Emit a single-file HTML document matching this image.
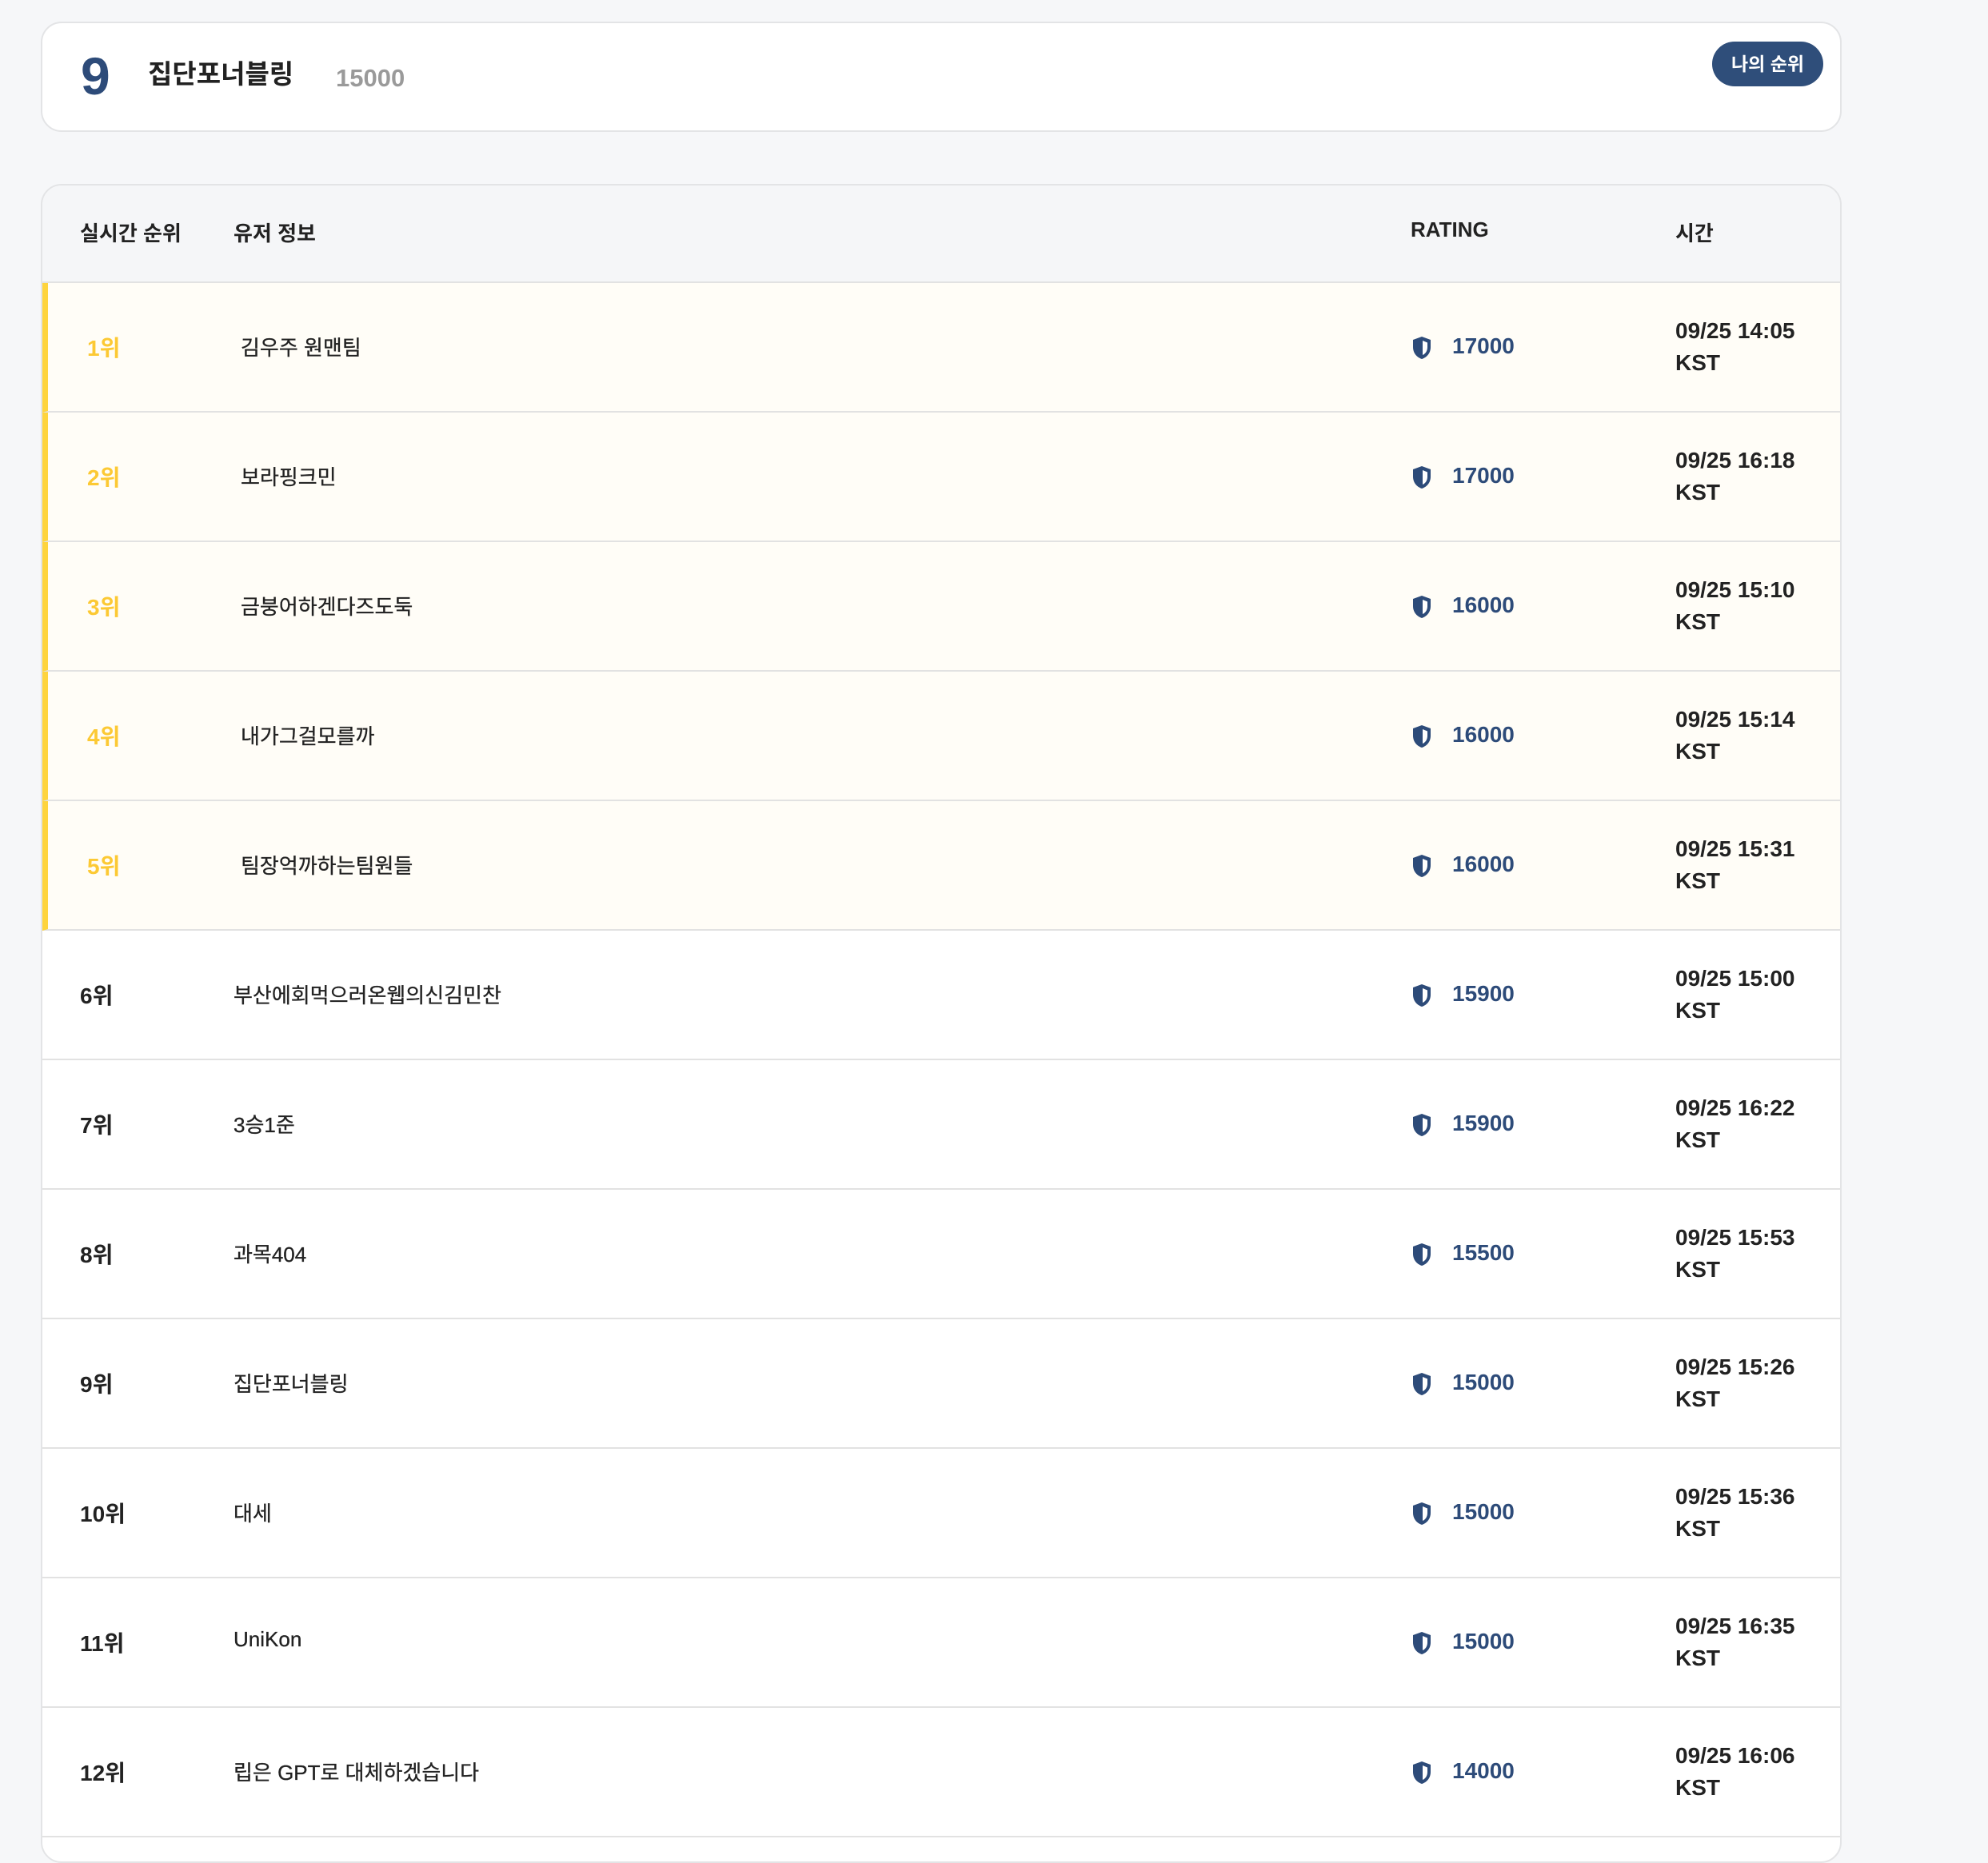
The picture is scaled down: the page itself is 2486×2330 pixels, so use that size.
<!DOCTYPE html>
<html><head><meta charset="utf-8"><style>
*{box-sizing:border-box;margin:0;padding:0}
body{width:2486px;height:2298px;background:#f6f7f9;font-family:"Liberation Sans","Noto Sans CJK KR",sans-serif;color:#222;overflow:hidden;position:relative}
.top{position:absolute;left:51px;top:27px;width:2252px;height:138px;background:#fff;border:2px solid #e3e4e6;border-radius:26px}
.top .n{position:absolute;left:48px;top:33px;font-size:66px;font-weight:bold;color:#2d4b79;line-height:1}
.top .nm{position:absolute;left:132px;top:44px;font-size:33px;font-weight:bold;color:#222;line-height:1.2}
.top .sc{position:absolute;left:367px;top:50px;font-size:31px;font-weight:bold;color:#9a9a9a;line-height:1.2}
.top .btn{position:absolute;left:2088px;top:23px;width:139px;height:56px;border-radius:28px;background:#2f4e7a;color:#fff;font-size:23px;font-weight:bold;text-align:center;line-height:56px}
.tbl{position:absolute;left:51px;top:230px;width:2252px;height:2100px;background:#fff;border:2px solid #e3e4e6;border-radius:26px;overflow:hidden}
.hd{position:absolute;left:0;top:0;width:100%;height:122px;background:#f5f6f8;border-bottom:2px solid #e2e2e2}
.hd div{position:absolute;top:40px;font-size:26px;font-weight:bold;color:#222}
.row{position:absolute;left:0;width:100%;height:162px;border-bottom:2px solid #e2e2e2;background:#fff}
.row.y{background:#fffdf7;border-left:7px solid #fed43e}
.row div{position:absolute}
.rk{left:47px;top:60px;font-size:28px;font-weight:bold;color:#222}
.y .rk{left:49px;color:#fcc934}
.nmc{left:239px;top:61px;font-size:26px;color:#222;-webkit-text-stroke:0.3px #222}
.y .nmc{left:241px}
.sh{left:1712px;top:66px}
.y .sh{left:1705px}
.rt{left:1763px;top:63px;font-size:28px;font-weight:bold;color:#2d4b79}
.y .rt{left:1756px}
.tm{left:2042px;top:40px;font-size:28px;font-weight:bold;line-height:40px;color:#222}
.y .tm{left:2035px}
</style></head><body>
<div class="top"><div class="n">9</div><div class="nm">집단포너블링</div><div class="sc">15000</div><div class="btn">나의 순위</div></div>
<div class="tbl">
<div class="hd"><div style="left:47px">실시간 순위</div><div style="left:239px">유저 정보</div><div style="left:1711px">RATING</div><div style="left:2042px">시간</div></div>
<div class="row y" style="top:122px"><div class="rk">1위</div><div class="nmc">김우주 원맨팀</div><div class="sh"><svg width="26" height="30" viewBox="0 0 26 30"><path d="M13 1 L24 5 L24 14 C24 22 19 27 13 29 C7 27 2 22 2 14 L2 5 Z" fill="#2d4b79"/><path d="M14 6 L20 8.5 L20 14 C20 19 17.5 22.5 14 24 Z" fill="#fff"/></svg></div><div class="rt">17000</div><div class="tm">09/25 14:05<br>KST</div></div>
<div class="row y" style="top:284px"><div class="rk">2위</div><div class="nmc">보라핑크민</div><div class="sh"><svg width="26" height="30" viewBox="0 0 26 30"><path d="M13 1 L24 5 L24 14 C24 22 19 27 13 29 C7 27 2 22 2 14 L2 5 Z" fill="#2d4b79"/><path d="M14 6 L20 8.5 L20 14 C20 19 17.5 22.5 14 24 Z" fill="#fff"/></svg></div><div class="rt">17000</div><div class="tm">09/25 16:18<br>KST</div></div>
<div class="row y" style="top:446px"><div class="rk">3위</div><div class="nmc">금붕어하겐다즈도둑</div><div class="sh"><svg width="26" height="30" viewBox="0 0 26 30"><path d="M13 1 L24 5 L24 14 C24 22 19 27 13 29 C7 27 2 22 2 14 L2 5 Z" fill="#2d4b79"/><path d="M14 6 L20 8.5 L20 14 C20 19 17.5 22.5 14 24 Z" fill="#fff"/></svg></div><div class="rt">16000</div><div class="tm">09/25 15:10<br>KST</div></div>
<div class="row y" style="top:608px"><div class="rk">4위</div><div class="nmc">내가그걸모를까</div><div class="sh"><svg width="26" height="30" viewBox="0 0 26 30"><path d="M13 1 L24 5 L24 14 C24 22 19 27 13 29 C7 27 2 22 2 14 L2 5 Z" fill="#2d4b79"/><path d="M14 6 L20 8.5 L20 14 C20 19 17.5 22.5 14 24 Z" fill="#fff"/></svg></div><div class="rt">16000</div><div class="tm">09/25 15:14<br>KST</div></div>
<div class="row y" style="top:770px"><div class="rk">5위</div><div class="nmc">팀장억까하는팀원들</div><div class="sh"><svg width="26" height="30" viewBox="0 0 26 30"><path d="M13 1 L24 5 L24 14 C24 22 19 27 13 29 C7 27 2 22 2 14 L2 5 Z" fill="#2d4b79"/><path d="M14 6 L20 8.5 L20 14 C20 19 17.5 22.5 14 24 Z" fill="#fff"/></svg></div><div class="rt">16000</div><div class="tm">09/25 15:31<br>KST</div></div>
<div class="row" style="top:932px"><div class="rk">6위</div><div class="nmc">부산에회먹으러온웹의신김민찬</div><div class="sh"><svg width="26" height="30" viewBox="0 0 26 30"><path d="M13 1 L24 5 L24 14 C24 22 19 27 13 29 C7 27 2 22 2 14 L2 5 Z" fill="#2d4b79"/><path d="M14 6 L20 8.5 L20 14 C20 19 17.5 22.5 14 24 Z" fill="#fff"/></svg></div><div class="rt">15900</div><div class="tm">09/25 15:00<br>KST</div></div>
<div class="row" style="top:1094px"><div class="rk">7위</div><div class="nmc">3승1준</div><div class="sh"><svg width="26" height="30" viewBox="0 0 26 30"><path d="M13 1 L24 5 L24 14 C24 22 19 27 13 29 C7 27 2 22 2 14 L2 5 Z" fill="#2d4b79"/><path d="M14 6 L20 8.5 L20 14 C20 19 17.5 22.5 14 24 Z" fill="#fff"/></svg></div><div class="rt">15900</div><div class="tm">09/25 16:22<br>KST</div></div>
<div class="row" style="top:1256px"><div class="rk">8위</div><div class="nmc">과목404</div><div class="sh"><svg width="26" height="30" viewBox="0 0 26 30"><path d="M13 1 L24 5 L24 14 C24 22 19 27 13 29 C7 27 2 22 2 14 L2 5 Z" fill="#2d4b79"/><path d="M14 6 L20 8.5 L20 14 C20 19 17.5 22.5 14 24 Z" fill="#fff"/></svg></div><div class="rt">15500</div><div class="tm">09/25 15:53<br>KST</div></div>
<div class="row" style="top:1418px"><div class="rk">9위</div><div class="nmc">집단포너블링</div><div class="sh"><svg width="26" height="30" viewBox="0 0 26 30"><path d="M13 1 L24 5 L24 14 C24 22 19 27 13 29 C7 27 2 22 2 14 L2 5 Z" fill="#2d4b79"/><path d="M14 6 L20 8.5 L20 14 C20 19 17.5 22.5 14 24 Z" fill="#fff"/></svg></div><div class="rt">15000</div><div class="tm">09/25 15:26<br>KST</div></div>
<div class="row" style="top:1580px"><div class="rk">10위</div><div class="nmc">대세</div><div class="sh"><svg width="26" height="30" viewBox="0 0 26 30"><path d="M13 1 L24 5 L24 14 C24 22 19 27 13 29 C7 27 2 22 2 14 L2 5 Z" fill="#2d4b79"/><path d="M14 6 L20 8.5 L20 14 C20 19 17.5 22.5 14 24 Z" fill="#fff"/></svg></div><div class="rt">15000</div><div class="tm">09/25 15:36<br>KST</div></div>
<div class="row" style="top:1742px"><div class="rk">11위</div><div class="nmc">UniKon</div><div class="sh"><svg width="26" height="30" viewBox="0 0 26 30"><path d="M13 1 L24 5 L24 14 C24 22 19 27 13 29 C7 27 2 22 2 14 L2 5 Z" fill="#2d4b79"/><path d="M14 6 L20 8.5 L20 14 C20 19 17.5 22.5 14 24 Z" fill="#fff"/></svg></div><div class="rt">15000</div><div class="tm">09/25 16:35<br>KST</div></div>
<div class="row" style="top:1904px"><div class="rk">12위</div><div class="nmc">립은 GPT로 대체하겠습니다</div><div class="sh"><svg width="26" height="30" viewBox="0 0 26 30"><path d="M13 1 L24 5 L24 14 C24 22 19 27 13 29 C7 27 2 22 2 14 L2 5 Z" fill="#2d4b79"/><path d="M14 6 L20 8.5 L20 14 C20 19 17.5 22.5 14 24 Z" fill="#fff"/></svg></div><div class="rt">14000</div><div class="tm">09/25 16:06<br>KST</div></div>
</div>
</body></html>
